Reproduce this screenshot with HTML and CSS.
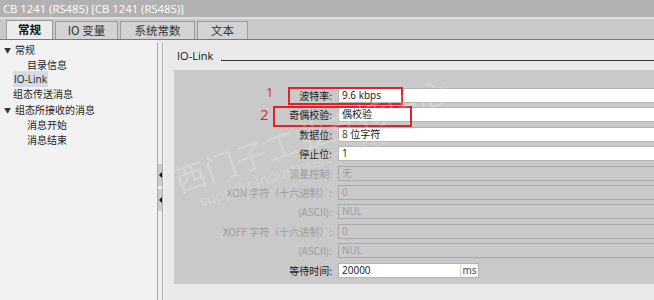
FILE: index.html
```html
<!DOCTYPE html>
<html lang="zh">
<head>
<meta charset="utf-8">
<title>CB 1241 (RS485)</title>
<link rel="stylesheet" href="styles.css">
</head>
<body>
<div class="page">
  <div class="titlebar">CB 1241 (RS485) [CB 1241 (RS485)]</div>
  <div class="tabstrip">
    <div class="tab active">常规</div>
    <div class="tab">IO 变量</div>
    <div class="tab">系统常数</div>
    <div class="tab">文本</div>
  </div>
  <div class="main">
    <div class="nav">
      <div class="nav-item lvl0"><span class="caret">▼</span>常规</div>
      <div class="nav-item lvl1">目录信息</div>
      <div class="nav-item lvl0b"><span class="sel">IO-Link</span></div>
      <div class="nav-item lvl0b">组态传送消息</div>
      <div class="nav-item lvl0 gap"><span class="caret">▼</span>组态所接收的消息</div>
      <div class="nav-item lvl1">消息开始</div>
      <div class="nav-item lvl1">消息结束</div>
    </div>
    <div class="splitter">
      <div class="grip"><span class="arrow"></span></div>
      <div class="grip"><span class="arrow"></span></div>
    </div>
    <div class="content">
      <div class="heading"><span class="heading-text">IO-Link</span><span class="heading-line"></span></div>
      <div class="section">
        <div class="form">
          <div class="label">波特率:</div><div class="field">9.6 kbps</div>
          <div class="label">奇偶校验:</div><div class="field">偶校验</div>
          <div class="label">数据位:</div><div class="field">8 位字符</div>
          <div class="label">停止位:</div><div class="field">1</div>
          <div class="label dis">流量控制:</div><div class="field dis">无</div>
          <div class="label dis">XON 字符（十六进制）:</div><div class="field dis">0</div>
          <div class="label dis">(ASCII):</div><div class="field dis">NUL</div>
          <div class="label dis">XOFF 字符（十六进制）:</div><div class="field dis">0</div>
          <div class="label dis">(ASCII):</div><div class="field dis">NUL</div>
          <div class="label">等待时间:</div><div class="field short"><span class="val">20000</span><span class="unit">ms</span></div>
        </div>
      </div>
    </div>
  </div>
  <div class="mark box1"></div>
  <div class="mark box2"></div>
  <div class="num n1">1</div>
  <div class="num n2">2</div>
  <div class="watermark">
    <div class="wm-big">西门子工业支持中心</div>
    <div class="wm-small">support.industry.siemens.com</div>
  </div>
</div>
</body>
</html>
```
FILE: styles.css
```css
* { box-sizing: border-box; }
html, body { margin: 0; padding: 0; }
body {
  font-family: "Open Sans", "Noto Sans CJK SC", sans-serif;
  font-size: 10px;
  color: #1a1a1a;
  background: #e9e9e9;
}
.page {
  position: relative;
  width: 654px;
  height: 300px;
  overflow: hidden;
}
.titlebar {
  height: 17px;
  background: #b1b1b1;
  color: #ffffff;
  font-size: 11.3px;
  line-height: 17px;
  padding-left: 3px;
  white-space: nowrap;
}
.tabstrip {
  height: 23px;
  background: #c9c9c9;
  border-top: 2px solid #dedede;
  border-bottom: 1px solid #7a7a7a;
  display: flex;
  align-items: flex-end;
  padding-left: 6px;
  gap: 2px;
}
.tab {
  height: 18px;
  border: 1px solid #9a9a9a;
  border-bottom: none;
  background: #d3d3d3;
  font-family: "Noto Sans CJK SC", "Open Sans", sans-serif;
  font-size: 11.5px;
  line-height: 17px;
  color: #333;
  text-align: center;
}
.tab:nth-child(1) { width: 47px; }
.tab:nth-child(2) { width: 63px; }
.tab:nth-child(3) { width: 75px; }
.tab:nth-child(4) { width: 51px; }
.tab.active {
  background: #ececec;
  font-weight: bold;
  color: #111;
  height: 19px;
}
.main {
  display: flex;
  height: 260px;
}
.nav {
  width: 157px;
  background: #f2f2f2;
  padding-top: 3px;
  font-family: "Noto Sans CJK SC", "Open Sans", sans-serif;
  font-size: 10px;
}
.nav-item {
  height: 14.6px;
  line-height: 14.6px;
  white-space: nowrap;
  color: #222;
}
.nav-item.gap { margin-top: 2px; }
.lvl0 { padding-left: 4px; }
.lvl0b { padding-left: 13px; }
.lvl1 { padding-left: 27px; }
.caret {
  display: inline-block;
  width: 11px;
  font-size: 7px;
  color: #333;
  vertical-align: 1px;
}
.sel {
  background: #d5dbe6;
  padding: 1px 1px;
  font-family: "Open Sans", sans-serif;
}
.splitter {
  width: 6px;
  background: #f0f0f0;
  border-left: 1px solid #a9a9a9;
  border-right: 1px solid #a9a9a9;
  margin-top: 3px;
  display: flex;
  flex-direction: column;
  align-items: center;
  padding-top: 121px;
  gap: 3px;
}
.grip {
  width: 4px;
  height: 22px;
  background: #cdcdcd;
  display: flex;
  align-items: center;
  justify-content: center;
}
.arrow {
  width: 0; height: 0;
  border-top: 3px solid transparent;
  border-bottom: 3px solid transparent;
  border-right: 3px solid #111;
}
.content {
  flex: 1;
  background: #e9e9e9;
  padding: 9px 0 0 10px;
  border-left: 1px solid #f6f6f6;
}
.heading {
  display: flex;
  align-items: flex-end;
  height: 14px;
  margin-bottom: 7px;
}
.heading-text {
  font-size: 11px;
  padding-left: 3px;
  line-height: 14px;
  color: #111;
}
.heading-line {
  flex: 1;
  margin-left: 8px;
  border-bottom: 1px solid #333;
  margin-bottom: 2px;
}
.section {
  background: #c9c9c9;
  height: 214px;
  padding-top: 18px;
}
.form {
  display: grid;
  grid-template-columns: 158px 1fr;
  grid-auto-rows: 19.4px;
  column-gap: 6px;
}
.label {
  text-align: right;
  font-family: "Noto Sans CJK SC", "Open Sans", sans-serif;
  font-size: 10px;
  line-height: 15px;
  color: #1a1a1a;
  white-space: nowrap;
}
.label.dis { color: #9c9c9c; }
.field {
  height: 15px;
  background: #ffffff;
  border: 1px solid #b4b4b4;
  font-family: "Open Sans", "Noto Sans CJK SC", sans-serif;
  font-size: 10px;
  line-height: 13px;
  padding-left: 3px;
  color: #111;
  margin-right: -6px;
}
.field.dis {
  background: #cacaca;
  border-color: #a9a9a9;
  color: #9c9c9c;
}
.field.short {
  width: 141px;
  display: flex;
  padding-left: 0;
  margin-right: 0;
}
.field.short .val { flex: 1; padding-left: 3px; }
.field.short .unit {
  width: 18px;
  border-left: 1px solid #d4d4d4;
  background: #f7f7f7;
  text-align: center;
  color: #444;
}
.mark {
  position: absolute;
  border: 2px solid #e0222c;
}
.box1 { left: 288px; top: 87px; width: 115px; height: 18px; }
.box2 { left: 273px; top: 106px; width: 139px; height: 21px; }
.num {
  position: absolute;
  color: #e0222c;
  font-family: "Open Sans", sans-serif;
  line-height: 1;
}
.n1 { left: 266px; top: 86px; font-size: 13px; }
.n2 { left: 260px; top: 107px; font-size: 15px; }
.watermark {
  position: absolute;
  left: 170px;
  top: 165px;
  transform: rotate(-19deg);
  transform-origin: left top;
  pointer-events: none;
  color: rgba(255, 255, 255, 0.22);
  white-space: nowrap;
}
.wm-big {
  font-family: "Noto Sans CJK SC", sans-serif;
  font-size: 31px;
  line-height: 34px;
  letter-spacing: 1px;
}
.wm-small {
  font-family: "Open Sans", sans-serif;
  font-size: 15px;
  padding-left: 16px;
}
```
